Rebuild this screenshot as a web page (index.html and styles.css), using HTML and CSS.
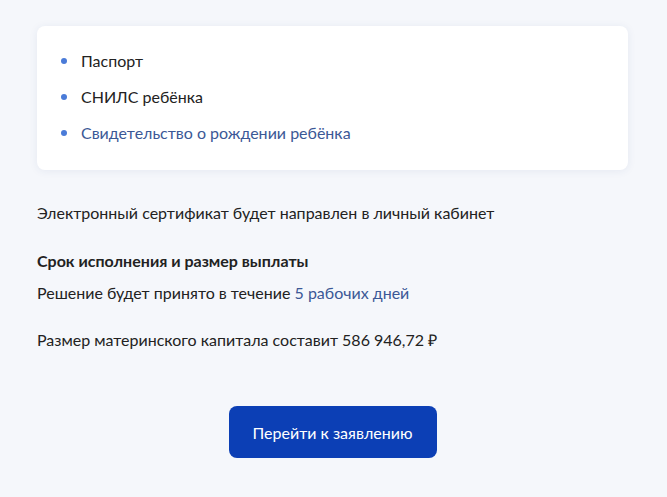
FILE: index.html
```html
<!DOCTYPE html>
<html lang="ru">
<head>
<meta charset="utf-8">
<link rel="stylesheet" href="styles.css">
</head>
<body>
<main class="page">
  <section class="card">
    <ul class="docs">
      <li class="doc">Паспорт</li>
      <li class="doc">СНИЛС ребёнка</li>
      <li class="doc doc-link">Свидетельство о рождении ребёнка</li>
    </ul>
  </section>
  <p class="note">Электронный сертификат будет направлен в личный кабинет</p>
  <h3 class="heading">Срок исполнения и размер выплаты</h3>
  <p class="line">Решение будет принято в течение <span class="link">5 рабочих дней</span></p>
  <p class="amount">Размер материнского капитала составит 586 946,72 ₽</p>
  <div class="actions">
    <button class="btn">Перейти к заявлению</button>
  </div>
</main>
</body>
</html>
```
FILE: styles.css
```css
html, body {
  margin: 0;
  padding: 0;
  background: #f5f7fb;
}
body {
  font-family: Lato, "Open Sans", "Liberation Sans", sans-serif;
  font-size: 16px;
  line-height: 24px;
  color: #222;
}
.page {
  padding: 26px 39px 0 37px;
}
.card {
  background: #fff;
  border-radius: 8px;
  box-shadow: 0 1px 8px rgba(40, 70, 130, 0.08);
  padding: 23px 24px 25px;
}
.docs {
  list-style: none;
  margin: 0;
  padding: 0;
  display: flex;
  flex-direction: column;
  gap: 12px;
}
.doc {
  display: flex;
  align-items: center;
  gap: 14px;
}
.doc::before {
  content: "";
  width: 6px;
  height: 6px;
  border-radius: 50%;
  background: #4a7bd8;
  flex: none;
}
.doc-link { color: #3b5896; }
.link { color: #3b5896; }
.note {
  margin: 31px 0 0;
}
.heading {
  margin: 24px 0 0;
  font-size: 16px;
  font-weight: 700;
  line-height: 24px;
}
.line {
  margin: 8px 0 0;
}
.amount {
  margin: 23px 0 0;
}
.actions {
  display: flex;
  justify-content: center;
  padding-top: 54px;
}
.btn {
  font-family: Lato, "Open Sans", "Liberation Sans", sans-serif;
  width: 208px;
  height: 52px;
  border: 0;
  border-radius: 8px;
  background: #0c3fb5;
  color: #fff;
  font-size: 16px;
  cursor: pointer;
}
```
